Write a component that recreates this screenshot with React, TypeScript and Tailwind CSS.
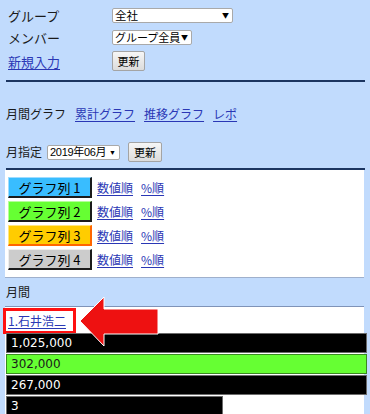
import React from "react";

const jp = { fontFamily: '"Noto Sans CJK JP", "Noto Sans", sans-serif' };
const num = { fontFamily: '"DejaVu Sans", "Liberation Sans", sans-serif' };
const arial = { fontFamily: '"Liberation Sans", "Noto Sans CJK JP", sans-serif' };

function FakeSelect({ w, label, small, tiny }: { w: string; label: string; small?: boolean; tiny?: boolean }) {
  return (
    <div
      className={`${w} h-[15px] bg-white border border-[#a9a9a9] rounded-[2px] flex items-center justify-between pl-[2px] pr-[3px] leading-none text-black whitespace-nowrap overflow-hidden`}
      style={small ? arial : jp}
    >
      <span className={small ? "text-[11px] tracking-[-0.3px]" : tiny ? "text-[11px]" : "text-[11.5px]"}>{label}</span>
      <span className="text-[7px] leading-none">▼</span>
    </div>
  );
}

function Btn({ w }: { w: string }) {
  return (
    <div
      className={`${w} h-[20px] border border-[#a4a4a4] rounded-[2px] bg-gradient-to-b from-[#f6f6f6] to-[#dcdcdc] flex items-center justify-center text-[11px] text-black leading-none`}
      style={jp}
    >
      更新
    </div>
  );
}

const cols = [
  { label: "グラフ列 1", cls: "bg-[#39bdff] border-t-[#9fdcff] border-l-[#9fdcff] border-r-[#1b1b1b] border-b-[#1b1b1b]" },
  { label: "グラフ列 2", cls: "bg-[#66ff33] border-t-[#b5ff99] border-l-[#b5ff99] border-r-[#1b1b1b] border-b-[#1b1b1b]" },
  { label: "グラフ列 3", cls: "bg-[#ffcc00] border-t-[#ffe680] border-l-[#ffe680] border-r-[#ff6600] border-b-[#ff6600]" },
  { label: "グラフ列 4", cls: "bg-[#cccccc] border-t-[#eeeeee] border-l-[#eeeeee] border-r-[#1b1b1b] border-b-[#1b1b1b]" },
];

const bars = [
  { v: "1,025,000", cls: "w-[361px] bg-black text-white border-[#6b6b6b]" },
  { v: "302,000", cls: "w-[361px] bg-[#66ff33] text-[#1a1a1a] border-[#3a8a20]" },
  { v: "267,000", cls: "w-[361px] bg-black text-white border-[#6b6b6b]" },
  { v: "3", cls: "w-[217px] bg-black text-white border-[#6b6b6b]" },
];

export default function App() {
  const link = "text-[#2a37b5] underline underline-offset-2";
  return (
    <div className="w-[370px] h-[414px] bg-[#c1dbfd] overflow-hidden relative text-[#1a1a1a]" style={jp}>
      <div className="px-[5px]">
        <div className="pt-[8px] pl-[3px] flex flex-col gap-[7px]">
          <div className="flex items-center h-[15px]">
            <span className="w-[104px] text-[13px] leading-none">グループ</span>
            <FakeSelect w="w-[121px]" label="全社" />
          </div>
          <div className="flex items-center h-[15px]">
            <span className="w-[104px] text-[13px] leading-none">メンバー</span>
            <FakeSelect w="w-[80px]" label="グループ全員" tiny />
          </div>
          <div className="flex items-center h-[20px] -mt-[1px]">
            <span className={`w-[104px] text-[13px] leading-none ${link}`}>新規入力</span>
            <Btn w="w-[33px]" />
          </div>
        </div>
        <div className="mt-[9px] ml-[1px] h-[2px] bg-[#1c3560]" />

        <div className="mt-[24px] pl-[1px] flex items-center h-[16px] text-[12px] leading-none">
          <span className="mr-[9px]">月間グラフ</span>
          <span className={`${link} mr-[9px]`}>累計グラフ</span>
          <span className={`${link} mr-[9px]`}>推移グラフ</span>
          <span className={link}>レポ</span>
        </div>

        <div className="mt-[20px] pl-[1px] flex items-center h-[20px]">
          <span className="text-[12px] leading-none mr-[5px]">月指定</span>
          <FakeSelect w="w-[73px]" label="2019年06月" small />
          <div className="ml-[8px]">
            <Btn w="w-[34px]" />
          </div>
        </div>
        <div className="mt-[6px] ml-[1px] h-[2px] bg-[#1c3560]" />

        <div className="bg-white w-[359px] pt-[7px] pb-[7px] pl-[3px] flex flex-col gap-[3px] border-b border-[#9fb0cc]">
          {cols.map((c) => (
            <div key={c.label} className="flex items-center h-[21px]">
              <div
                className={`w-[84px] h-[21px] border-t border-l border-r-2 border-b-2 ${c.cls} flex items-center justify-center text-[13px] leading-none text-black`}
              >
                {c.label}
              </div>
              <span className={`${link} text-[12px] leading-none ml-[5px]`}>数値順</span>
              <span className={`${link} text-[12px] leading-none ml-[8px]`}>%順</span>
            </div>
          ))}
        </div>

        <div className="h-[28px] flex items-center pl-[1px] text-[12px] leading-none">月間</div>

        <div className="bg-white w-[359px] border-t border-[#7f93b8] h-[200px]">
          <div className="pt-[1px]">
            <div className="w-[73px] h-[26px] border-[3px] border-[#ff1010] flex items-center pl-[2px] -ml-[2px]">
              <span className={`${link} text-[12px] leading-none`}>1.石井浩二</span>
            </div>
          </div>
          <div className="flex flex-col gap-[1px] ml-[1px] -mt-[1px]" style={num}>
            {bars.map((b) => (
              <div key={b.v} className={`${b.cls} h-[20px] border flex items-center pl-[4px] text-[12px] leading-none`}>
                {b.v}
              </div>
            ))}
          </div>
        </div>
      </div>

      <svg className="absolute left-0 top-0 pointer-events-none" width="370" height="414" viewBox="0 0 370 414">
        <polygon
          points="80,321 104,297 104,309 158,309 158,334 104,334 104,346"
          fill="#ee1111"
          stroke="#ffffff"
          strokeWidth="1"
        />
      </svg>
    </div>
  );
}
